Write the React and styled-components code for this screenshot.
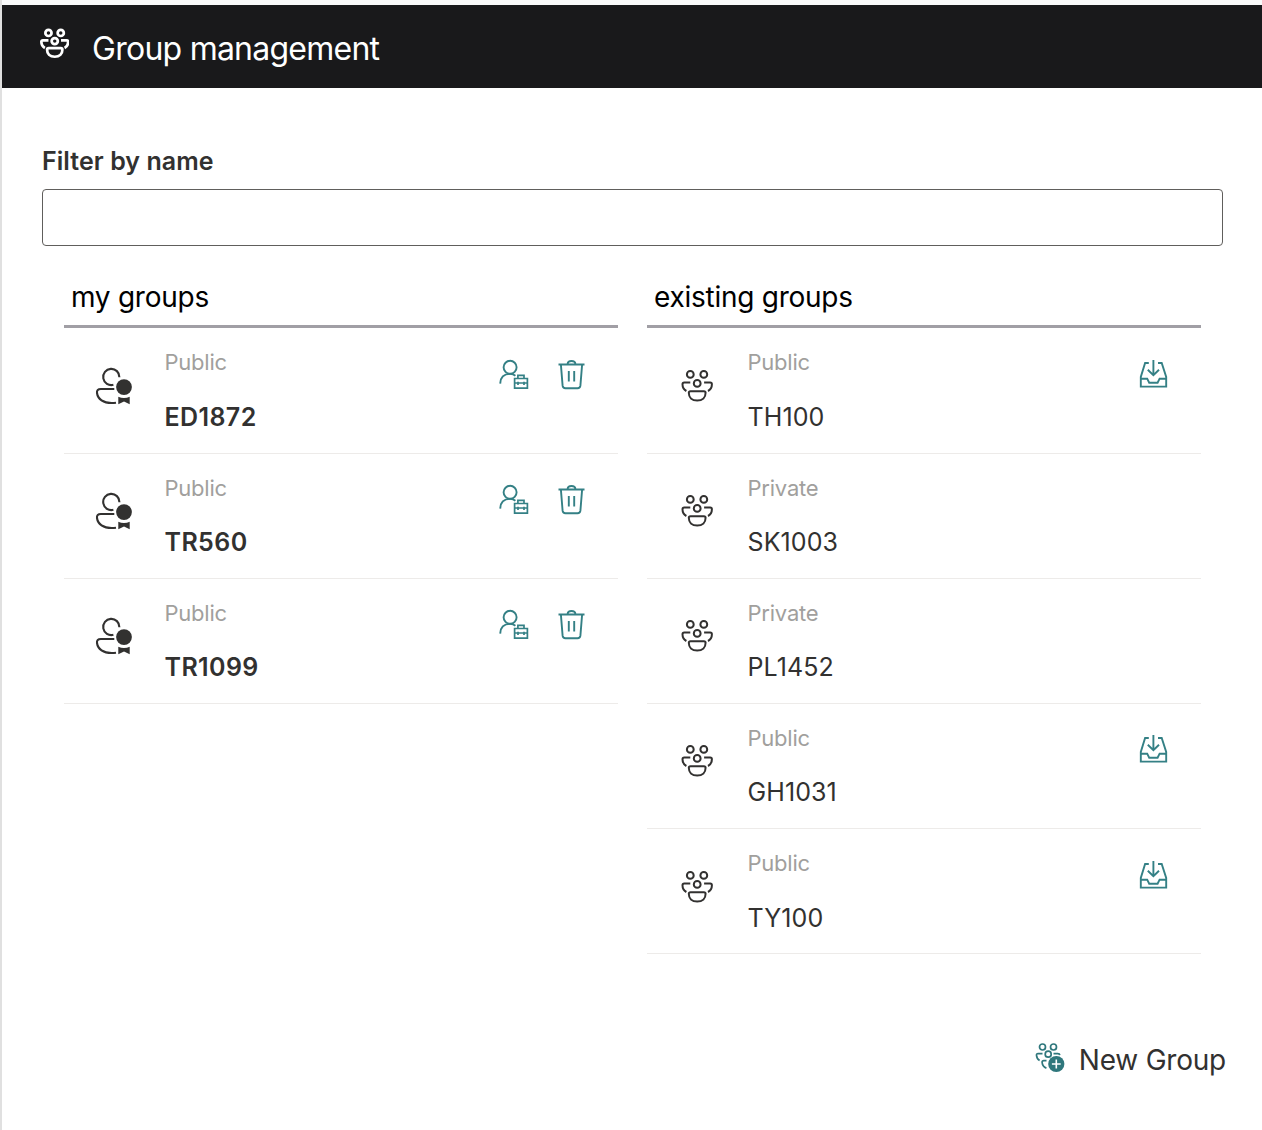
import React from "react";
import styled, { createGlobalStyle } from "styled-components";

const GlobalStyle = createGlobalStyle`
  * { box-sizing: border-box; }
  body {
    margin: 0;
    background: #fff;
    font-family: Inter, "Liberation Sans", sans-serif;
    -webkit-font-smoothing: antialiased;
  }
  h1, h2, ul { margin: 0; padding: 0; }
`;

const Frame = styled.div`
  height: 1130px;
  padding-top: 5px;
  border-left: 2px solid #e0e0e0;
  background: linear-gradient(#f9fafa 5px, #fff 5px);
  overflow: hidden;
`;

const Header = styled.header`
  display: flex;
  align-items: flex-start;
  height: 83px;
  padding: 23px 0 0 38px;
  background: #19191b;
  color: #fff;
`;

const Title = styled.h1`
  margin: 1px 0 0 23px;
  font-size: 32px;
  line-height: 40px;
  font-weight: 400;
  letter-spacing: -0.76px;
`;

const Content = styled.main`
  padding: 58px 39px 0 40px;
`;

const FilterLabel = styled.label`
  display: block;
  height: 43px;
  font-size: 25px;
  line-height: 31px;
  font-weight: 600;
  letter-spacing: 0.06px;
  color: #323130;
`;

const FilterInput = styled.input`
  display: block;
  width: 100%;
  height: 57px;
  border: 1px solid #605e5c;
  border-radius: 4px;
  padding: 0 16px;
  font: 400 26px Inter, sans-serif;
  background: #fff;
  outline: none;
`;

const Columns = styled.div`
  display: grid;
  grid-template-columns: 554px 554px;
  gap: 29px;
  height: 794px;
  padding: 32px 22px 0;
`;

const ColumnTitle = styled.h2`
  height: 50px;
  padding-left: 7px;
  border-bottom: 3px solid #a19fa5;
  font-size: 28px;
  line-height: 38px;
  font-weight: 400;
  letter-spacing: -0.26px;
  color: #000;
`;

const List = styled.ul`
  list-style: none;
  && { padding-top: 0.4px; }
`;

const Row = styled.li`
  display: grid;
  grid-template-columns: 100.5px 1fr auto;
  height: 125.2px;
  padding-right: ${(p) => (p.$owned ? "30px" : "32px")};
  border-bottom: 1px solid #edebe9;
`;

const Avatar = styled.div`
  padding: ${(p) => (p.$owned ? "37.4px 0 0 30px" : "40.4px 0 0 34px")};
`;

const Visibility = styled.div`
  padding-top: 19px;
  font-size: 22px;
  line-height: 30px;
  letter-spacing: -0.22px;
  color: #a19f9d;
`;

const GroupName = styled.div`
  margin-top: 23.4px;
  font-size: 25px;
  line-height: 32px;
  font-weight: ${(p) => (p.$owned ? 600 : 400)};
  letter-spacing: ${(p) => (p.$owned ? "0.4px" : "0.1px")};
  color: #323130;
`;

const Actions = styled.div`
  display: flex;
  gap: 26px;
  padding-top: 29.4px;
`;

const IconButton = styled.button`
  display: block;
  width: 32px;
  height: 32px;
  padding: 0;
  border: 0;
  background: none;
  color: #348085;
  cursor: pointer;
`;

const Footer = styled.footer`
  display: flex;
  justify-content: flex-end;
  margin-right: -3px;
`;

const NewGroupButton = styled.button`
  display: flex;
  align-items: flex-start;
  gap: 13px;
  padding: 0;
  border: 0;
  background: none;
  font: 400 28px/40px Inter, sans-serif;
  letter-spacing: -0.22px;
  color: #323130;
  cursor: pointer;
`;

const Svg = styled.svg`
  display: block;
  flex: none;
  fill: none;
  stroke: currentColor;
  stroke-width: ${(p) => p.$weight || 2};
  color: ${(p) => p.$color || "inherit"};
`;

const GroupIcon = ({ color, weight, scale = 1 }) => (
  <Svg width={32 * scale} height={34 * scale} viewBox="0 0 32 34" $color={color} $weight={weight}>
    <circle cx="9.3" cy="5.4" r="3.4" />
    <circle cx="22.8" cy="5.4" r="3.4" />
    <circle cx="16.2" cy="14.4" r="3.4" />
    <path d="M9.3 13.5H3.2c-1.1 0-1.7.7-1.7 1.7 0 3.1 1.3 5.4 3.9 6.8M23.1 13.5h6.1c1.1 0 1.7.7 1.7 1.7 0 3.1-1.3 5.4-3.9 6.8" />
    <path d="M9.5 22.2h13.4c1 0 1.7.6 1.7 1.6 0 4.6-3.1 7.8-8.4 7.8s-8.4-3.2-8.4-7.8c0-1 .7-1.6 1.7-1.6Z" />
  </Svg>
);

const OwnerIcon = () => (
  <Svg width="40" height="42" viewBox="0 0 40 42" $color="#323130" $weight={2.1}>
    <path d="M19.4 18.8a8.1 8.1 0 1 1 6-7.6" />
    <path d="M20.3 23H6.8c-2.7 0-4.2 1.2-3.8 4 .8 6.2 6.5 10 14.6 10 1.6 0 3-.1 4.4-.3" />
    <circle cx="30" cy="21.1" r="7.9" fill="currentColor" stroke="none" />
    <path d="M24.3 30.8c3.6 1.6 7.8 1.6 11.4 0v7.5L30 35.6l-5.7 2.7Z" fill="currentColor" stroke="none" />
  </Svg>
);

const ManageIcon = () => (
  <Svg width="32" height="32" viewBox="0 0 32 32" $weight={1.9}>
    <circle cx="12.1" cy="9.3" r="6.5" />
    <path d="M2.2 25.6c.2-5.8 3.5-9.7 9.9-9.7 2.1 0 3.9.6 5.3 1.8" />
    <path d="M16.6 20.5h12.8v9.6H16.6ZM19.9 20.5v-3.1h6.1v3.1M16.6 25h12.8M20 23.8V27M26 23.8V27" strokeWidth="1.7" />
  </Svg>
);

const TrashIcon = () => (
  <Svg width="32" height="32" viewBox="0 0 32 32" $weight={1.9}>
    <path d="M2.5 6.5h26M11.5 6.3c.2-2.1 1.6-3.3 4-3.3s3.8 1.2 4 3.3M4.9 6.7l1.7 21c.2 1.8 1.1 2.6 2.8 2.6h12.2c1.7 0 2.6-.8 2.8-2.6l1.7-21M12.8 13v10.5M18.2 13v10.5" />
  </Svg>
);

const JoinIcon = () => (
  <Svg width="32" height="32" viewBox="0 0 32 32" $weight={1.9}>
    <path d="M11.8 5H8.1L3.8 18.9v9.7h25.4V18.9L24.7 5H21M3.8 20.7h6.4l2 4h8.4l2-4h6.6M16.4 2v14.8M10.8 11.8l5.6 5.4 5.6-5.4" />
  </Svg>
);

const NewGroupIcon = () => (
  <Svg width="31" height="34" viewBox="0 -2 31 34" $color="#2f777c" $weight={1.7}>
    <circle cx="7.5" cy="5" r="3" />
    <circle cx="18.5" cy="5" r="3" />
    <circle cx="13.2" cy="12.2" r="3" />
    <path d="M7.5 11.6H3.1c-1.2 0-1.7.6-1.6 1.7.2 2.2 1.2 4 3.1 5.1M18.5 11.6h4.3c1.2 0 1.9.5 2 1.6M11.5 18.6H8.8c-1.2 0-1.8.6-1.7 1.7.3 3 1.8 4.9 4.3 5.8" />
    <circle cx="21.3" cy="22" r="8.1" fill="currentColor" stroke="none" />
    <path d="M21.3 17.6v8.8M16.9 22h8.8" stroke="#fff" strokeWidth="1.6" />
  </Svg>
);

const myGroups = [
  { name: "ED1872", visibility: "Public" },
  { name: "TR560", visibility: "Public" },
  { name: "TR1099", visibility: "Public" },
];

const existingGroups = [
  { name: "TH100", visibility: "Public" },
  { name: "SK1003", visibility: "Private" },
  { name: "PL1452", visibility: "Private" },
  { name: "GH1031", visibility: "Public" },
  { name: "TY100", visibility: "Public" },
];

function GroupRow({ group, owned }) {
  return (
    <Row $owned={owned}>
      <Avatar $owned={owned}>
        {owned ? <OwnerIcon /> : <GroupIcon color="#323130" />}
      </Avatar>
      <div>
        <Visibility>{group.visibility}</Visibility>
        <GroupName $owned={owned}>{group.name}</GroupName>
      </div>
      <Actions>
        {owned && (
          <>
            <IconButton aria-label="Manage members"><ManageIcon /></IconButton>
            <IconButton aria-label="Delete group"><TrashIcon /></IconButton>
          </>
        )}
        {!owned && group.visibility === "Public" && (
          <IconButton aria-label="Join group"><JoinIcon /></IconButton>
        )}
      </Actions>
    </Row>
  );
}

function GroupColumn({ title, groups, owned }) {
  return (
    <section>
      <ColumnTitle>{title}</ColumnTitle>
      <List>
        {groups.map((g) => (
          <GroupRow key={g.name} group={g} owned={owned} />
        ))}
      </List>
    </section>
  );
}

export default function App() {
  return (
    <>
      <GlobalStyle />
      <Frame>
        <Header>
          <GroupIcon weight={3} scale={0.91} />
          <Title>Group management</Title>
        </Header>
        <Content>
          <FilterLabel htmlFor="filter">Filter by name</FilterLabel>
          <FilterInput id="filter" type="text" />
          <Columns>
            <GroupColumn title="my groups" groups={myGroups} owned />
            <GroupColumn title="existing groups" groups={existingGroups} />
          </Columns>
          <Footer>
            <NewGroupButton>
              <NewGroupIcon />
              New Group
            </NewGroupButton>
          </Footer>
        </Content>
      </Frame>
    </>
  );
}
